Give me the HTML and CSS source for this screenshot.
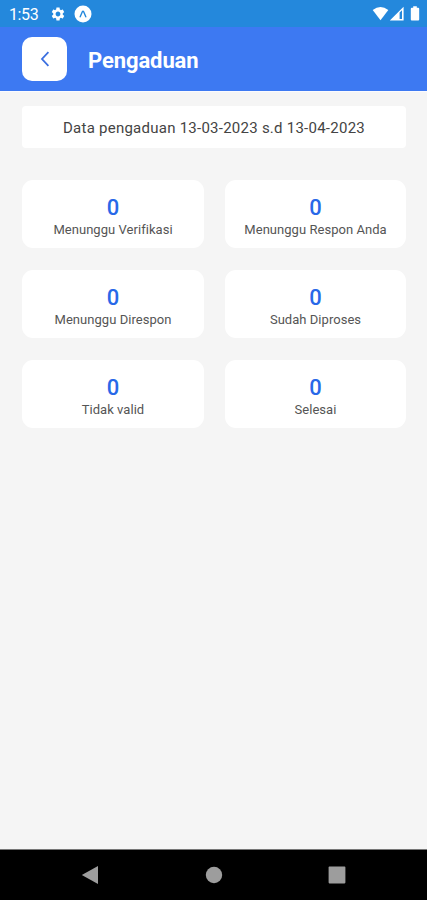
FILE: index.html
```html
<!DOCTYPE html>
<html lang="id">
<head>
<meta charset="utf-8">
<title>Pengaduan</title>
<link rel="stylesheet" href="styles.css">
</head>
<body>
<div class="status">
  <span class="time">1:53</span>
  <svg class="gear" width="16" height="16" viewBox="0 0 24 24"><path fill="#fff" d="M19.14 12.94c.04-.3.06-.61.06-.94 0-.32-.02-.64-.07-.94l2.03-1.58c.18-.14.23-.41.12-.61l-1.92-3.32c-.12-.22-.37-.29-.59-.22l-2.39.96c-.5-.38-1.03-.7-1.62-.94l-.36-2.54c-.04-.24-.24-.41-.48-.41h-3.84c-.24 0-.43.17-.47.41l-.36 2.54c-.59.24-1.13.57-1.62.94l-2.39-.96c-.22-.08-.47 0-.59.22L2.74 8.87c-.12.21-.08.47.12.61l2.03 1.58c-.05.3-.09.63-.09.94s.02.64.07.94l-2.03 1.58c-.18.14-.23.41-.12.61l1.92 3.32c.12.22.37.29.59.22l2.39-.96c.5.38 1.03.7 1.62.94l.36 2.54c.05.24.24.41.48.41h3.84c.24 0 .44-.17.47-.41l.36-2.54c.59-.24 1.13-.56 1.62-.94l2.39.96c.22.08.47 0 .59-.22l1.92-3.32c.12-.22.07-.47-.12-.61l-2.01-1.58zM12 15.6c-1.98 0-3.6-1.62-3.6-3.6s1.62-3.6 3.6-3.6 3.6 1.62 3.6 3.6-1.62 3.6-3.6 3.6z"/></svg>
  <svg class="expo" width="18" height="18" viewBox="0 0 18 18"><circle cx="9" cy="9" r="8.5" fill="#fff"/><path d="M6.2 11.8 8.3 6.8Q9 5.6 9.7 6.8L11.8 11.8" fill="none" stroke="#2488dc" stroke-width="1.4" stroke-linecap="round"/></svg>
  <svg class="signals" width="50" height="16" viewBox="0 0 50 16"><path fill="#fff" d="M.7 4.1Q8.5-1.9 16.3 4.1L8.5 14.2Z"/><path fill="#fff" fill-rule="evenodd" d="M31.6.8V14.5H17.8ZM27.6 6.4V13H30V4.2Z"/><path fill="#fff" d="M41.2.2h3.6v1.6h1.4q1 0 1 1V13.5q0 1-1 1h-6.4q-1 0-1-1V2.8q0-1 1-1h1.4Z"/></svg>
</div>
<header class="header">
  <div class="back"><svg width="12" height="18" viewBox="0 0 12 18"><path d="M9.4 2.2 3 9l6.4 6.8" fill="none" stroke="#3b6fe0" stroke-width="1.8"/></svg></div>
  <h1 class="title">Pengaduan</h1>
</header>
<main class="content">
  <div class="range"><span>Data pengaduan 13-03-2023 s.d 13-04-2023</span></div>
  <div class="grid">
    <div class="card"><b>0</b><span>Menunggu Verifikasi</span></div>
    <div class="card"><b>0</b><span>Menunggu Respon Anda</span></div>
    <div class="card"><b>0</b><span>Menunggu Direspon</span></div>
    <div class="card"><b>0</b><span>Sudah Diproses</span></div>
    <div class="card"><b>0</b><span>Tidak valid</span></div>
    <div class="card"><b>0</b><span>Selesai</span></div>
  </div>
</main>
<nav class="nav">
  <svg width="18" height="20" viewBox="0 0 18 20"><path d="M.8 10 17 1v18Z" fill="#9d9d9d"/></svg>
  <svg width="18" height="20" viewBox="0 0 18 20"><circle cx="9" cy="10" r="8.2" fill="#9d9d9d"/></svg>
  <svg width="18" height="20" viewBox="0 0 18 20"><rect x=".6" y="1.6" width="16.8" height="16.8" rx=".8" fill="#9d9d9d"/></svg>
</nav>
</body>
</html>
```
FILE: styles.css
```css
* { box-sizing: border-box; }
body {
  margin: 0;
  height: 900px;
  display: flex;
  flex-direction: column;
  background: #f5f5f5;
  font-family: Roboto, "Liberation Sans", sans-serif;
  overflow: hidden;
}
svg { display: block; flex: none; }
.status {
  height: 27px;
  flex: none;
  display: flex;
  align-items: center;
  padding: 1px 5px 0 9px;
  background: #2488dc;
  color: #fff;
}
.time { width: 41px; padding-top: 1px; font-size: 16px; line-height: 20px; letter-spacing: -0.4px; }
.expo { margin-left: 7.5px; }
.signals { margin-left: auto; }
.header {
  height: 65px;
  flex: none;
  display: flex;
  align-items: center;
  padding: 0 22px 1px;
  background: #3d79f2;
  border-bottom: 1px solid #fbfbff;
}
.back {
  width: 45px;
  height: 44px;
  border-radius: 10px;
  background: #fff;
  display: flex;
  align-items: center;
  justify-content: center;
}
.title { margin: 4px 0 0 21px; font-size: 22px; line-height: 28px; font-weight: 700; letter-spacing: -0.1px; color: #fff; }
.content { flex: 1; padding: 14px 21px 0 22px; }
.range {
  height: 42px;
  padding-top: 1px;
  border-radius: 4px;
  background: #fff;
  display: flex;
  align-items: center;
  justify-content: center;
  font-size: 15px;
  letter-spacing: 0.25px;
  color: #444;
  white-space: nowrap;
}
.grid {
  margin-top: 32px;
  display: grid;
  grid-template-columns: 182px 181px;
  justify-content: space-between;
  grid-auto-rows: 68px;
  row-gap: 22px;
}
.card {
  display: flex;
  flex-direction: column;
  align-items: center;
  padding-top: 15px;
  border-radius: 11px;
  background: #fff;
}
.card b { font-size: 22px; line-height: 26px; font-weight: 500; color: #2868e8; }
.card span { font-size: 13px; line-height: 18px; letter-spacing: 0.04px; color: #555; white-space: nowrap; }
.nav {
  height: 51px;
  flex: none;
  display: flex;
  justify-content: space-between;
  align-items: center;
  padding: 0 81px;
  background: #000;
  border-top: 1px solid #777;
}
```
